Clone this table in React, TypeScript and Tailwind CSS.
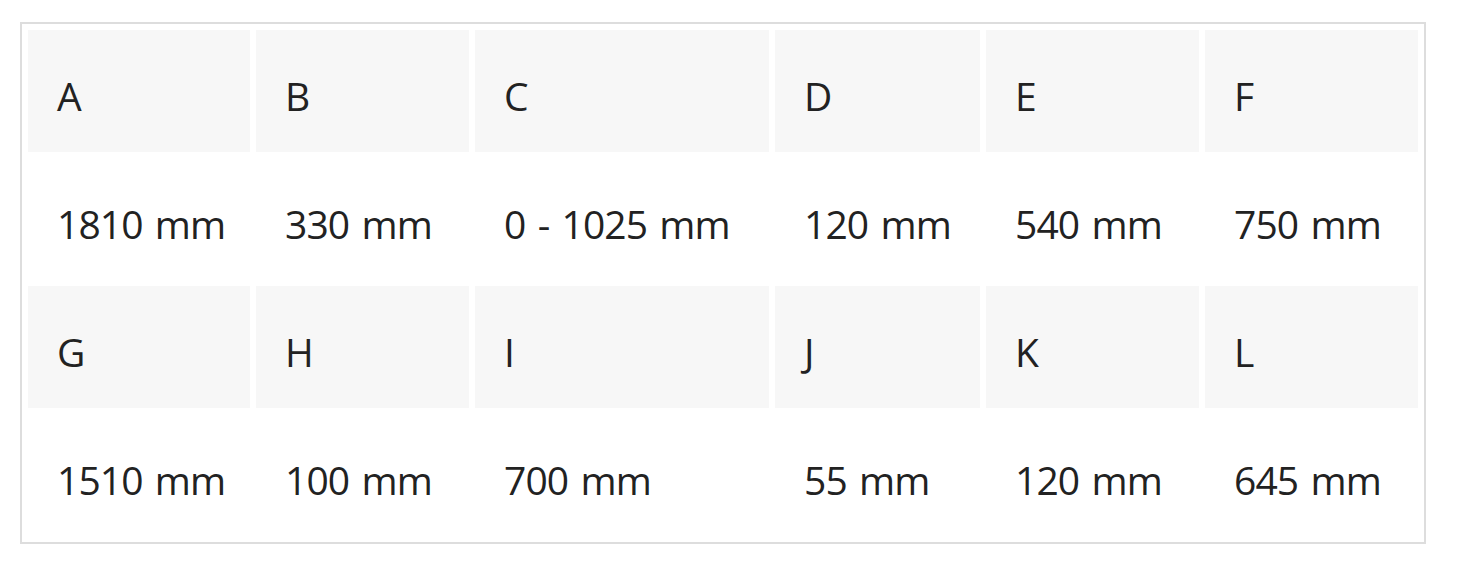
const headers = [
  ['A', 'B', 'C', 'D', 'E', 'F'],
  ['G', 'H', 'I', 'J', 'K', 'L'],
];

const values = [
  ['1810 mm', '330 mm', '0 - 1025 mm', '120 mm', '540 mm', '750 mm'],
  ['1510 mm', '100 mm', '700 mm', '55 mm', '120 mm', '645 mm'],
];

const widths = ['w-[222px]', 'w-[213px]', 'w-[294px]', 'w-[205px]', 'w-[213px]', 'w-[213px]'];

export default function App() {
  return (
    <div className="min-h-[586px] bg-white pt-[22px] pl-[20px] font-['Open_Sans',sans-serif] text-[#222222]">
      <table className="w-[1406px] table-fixed border-separate border-spacing-[6px] border-2 border-[#dddddd]">
        <colgroup>
          {widths.map((w, i) => (
            <col key={i} className={w} />
          ))}
        </colgroup>
        <tbody>
          {headers.map((row, r) => (
            <>
              <tr key={`h${r}`}>
                {row.map((label) => (
                  <td
                    key={label}
                    className="h-[122px] bg-[#f7f7f7] pl-[29px] pt-[46px] align-top text-[39px] leading-none tracking-[-0.9px] [word-spacing:3px]"
                  >
                    {label}
                  </td>
                ))}
              </tr>
              <tr key={`v${r}`}>
                {values[r].map((v, i) => (
                  <td
                    key={i}
                    className="h-[122px] bg-white pl-[29px] pt-[46px] align-top text-[39px] leading-none tracking-[-0.9px] [word-spacing:3px] whitespace-nowrap"
                  >
                    {v}
                  </td>
                ))}
              </tr>
            </>
          ))}
        </tbody>
      </table>
    </div>
  );
}
